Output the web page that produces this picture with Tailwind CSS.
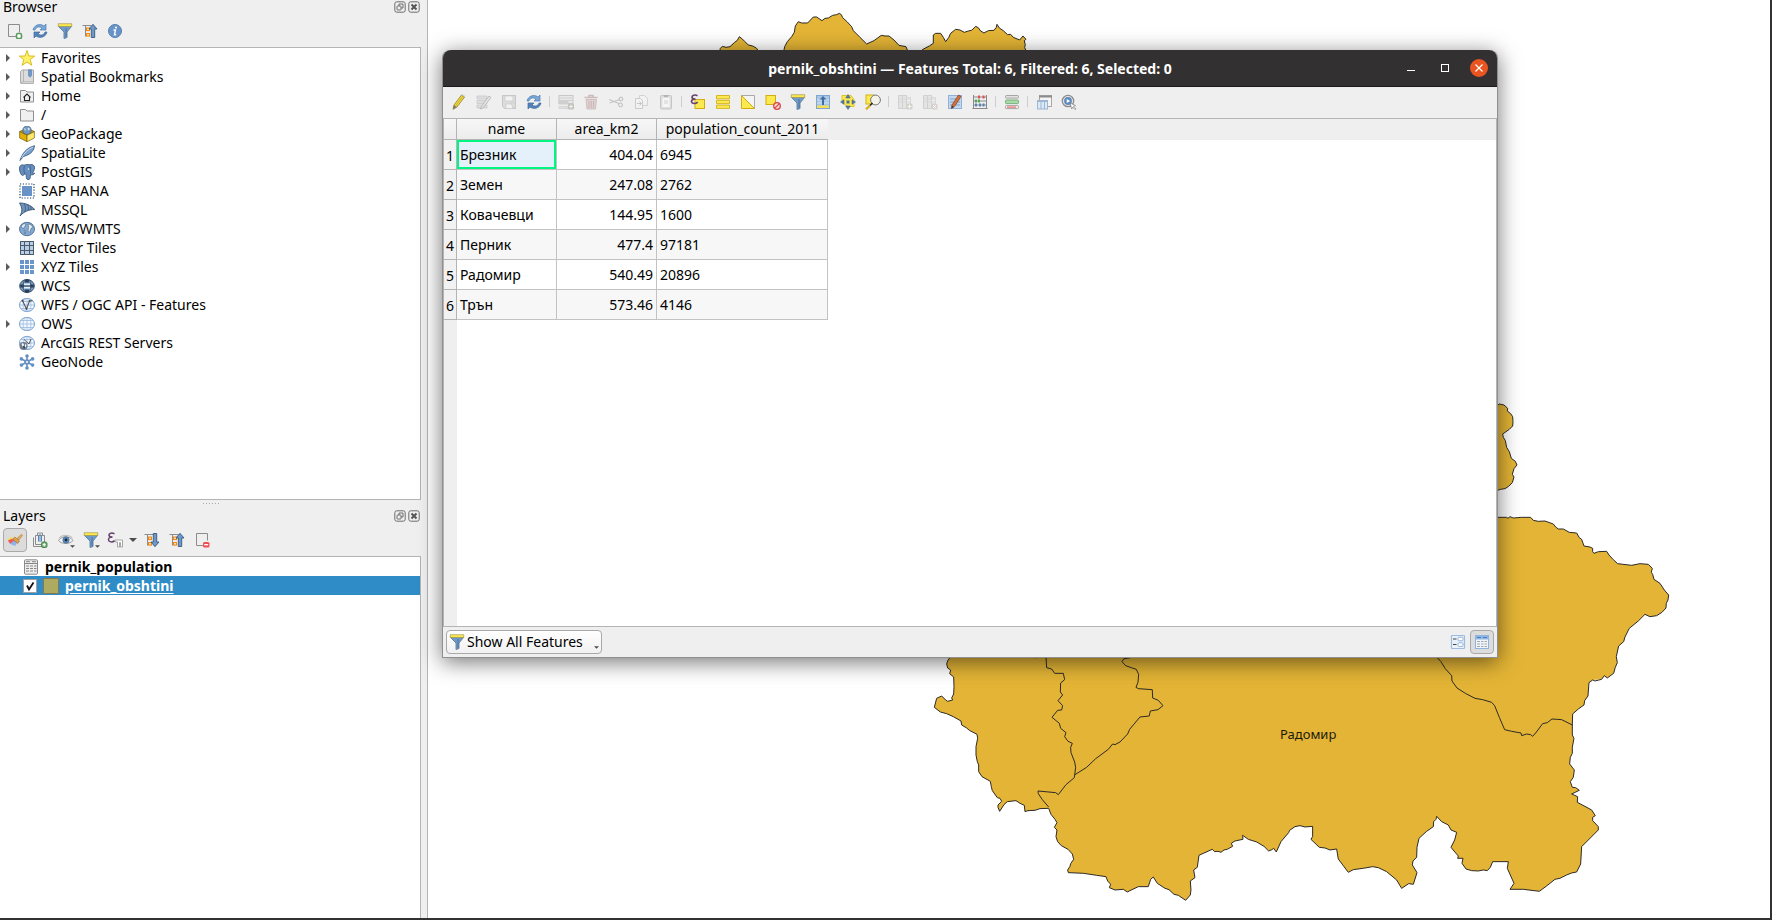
<!DOCTYPE html>
<html lang="en">
<head>
<meta charset="utf-8">
<title>pernik_obshtini — Features</title>
<script src="https://cdn.jsdelivr.net/npm/@tailwindcss/browser@4"></script>
</head>
<body class="h-screen overflow-hidden bg-white font-['Noto_Sans','Open_Sans',sans-serif] text-sm text-black">

<svg class="hidden" aria-hidden="true">
  <defs>
    <symbol id="add-layer" viewBox="0 0 16 16"><path d="M10 13.500H1.500V1.500h11v8" fill="none" stroke="#8c8c8c"/><rect x="9.500" y="10.500" width="5" height="5" rx="1.500" fill="#fff" stroke="#5b9a5f" stroke-width="1.600"/></symbol>
    <symbol id="refresh" viewBox="0 0 16 16"><path d="M1 7C2 2 8 0 12 3l2-2v6H8l2-2C7 3 4 4 3 7z" fill="#7ba7d6" stroke="#4d7fb5" stroke-width=".7"/><path d="M15 9c-1 5-7 7-11 4l-2 2V9h6l-2 2c3 2 6 1 7-2z" fill="#5482b7" stroke="#416f9f" stroke-width=".7"/></symbol>
    <symbol id="funnel" viewBox="0 0 16 16"><path d="M1.500 3.500h13L10 9v5.500l-3 1V9z" fill="#6f9bcb" stroke="#5d7f9f" stroke-width=".9"/><path d="M9 5v9" stroke="#466b91" stroke-width=".8"/><rect x="1.200" y=".8" width="13.600" height="2.600" fill="#fce94f" stroke="#a39a54" stroke-width=".7"/></symbol>
    <symbol id="collapse" viewBox="0 0 16 16"><path d="M.5 2.500h9M3.500 2.500v11M3.500 6h2M3.500 12.500h2" fill="none" stroke="#8c8c8c"/><rect x="4.500" y="5" width="3" height="2.600" fill="#ffd9a8" stroke="#f5860c"/><rect x="4.500" y="10.500" width="3" height="2.600" fill="#ffd9a8" stroke="#f5860c"/><path d="M11 1.300 15 6h-2.300v8.500H9.300V6H7z" fill="#6f97c7" stroke="#335b83" stroke-width=".9"/></symbol>
    <symbol id="expand" viewBox="0 0 16 16"><path d="M.5 2.500h9M3.500 2.500v11M3.500 6h2M3.500 12.500h2" fill="none" stroke="#8c8c8c"/><rect x="4.500" y="5" width="3" height="2.600" fill="#ffd9a8" stroke="#f5860c"/><rect x="4.500" y="10.500" width="3" height="2.600" fill="#ffd9a8" stroke="#f5860c"/><path d="M11 14.700 15 10h-2.300V1.500H9.300V10H7z" fill="#6f97c7" stroke="#335b83" stroke-width=".9"/></symbol>
    <symbol id="info" viewBox="0 0 16 16"><circle cx="8" cy="8" r="6.500" fill="#6793c6" stroke="#5580b0"/><circle cx="9" cy="4.500" r="1.100" fill="#fff"/><path d="M6.500 7h2L7.500 11.700h1.700" fill="none" stroke="#fff" stroke-width="1.400"/></symbol>
    <symbol id="star" viewBox="0 0 16 16"><path d="M8 .5 9.900 6l5.800.1-4.500 3.500 1.600 5.700L8 12l-4.800 3.300 1.600-5.700L.3 6.100 6.100 6z" fill="#fdf06a" stroke="#d9b511" stroke-width=".9"/></symbol>
    <symbol id="bookmark" viewBox="0 0 16 16"><path d="M1.500 2.500 3 1h11.500v12H3l-1 1.500-.5-1z" fill="#dcdcdc" stroke="#a9a9a9"/><path d="M4.500 1v12M2 14.500h12.500V13" fill="none" stroke="#b4b4b4"/><path d="M9.500.8h3v6L11 8.300 9.500 6.800z" fill="#6c98ca" stroke="#4a76a8" stroke-width=".5"/></symbol>
    <symbol id="folder" viewBox="0 0 16 16"><path d="M1.500 2.500h5l1.500 1.500h6.500v10h-13z" fill="#f0f0f0" stroke="#8e8e8e"/></symbol>
    <symbol id="home" viewBox="0 0 16 16"><use href="#folder"/><path d="M4.500 9.500 8 6l3.500 3.500M5.500 9v3.500h5V9" fill="none" stroke="#222" stroke-width="1.100"/></symbol>
    <symbol id="geopackage" viewBox="0 0 16 16"><path d="M.6 5.500 8 2l7.400 3.500L8 9.500z" fill="#c29a12" stroke="#7b6410" stroke-width=".7"/><circle cx="8" cy="4.300" r="4.100" fill="#6f97c4" stroke="#3f5c7c" stroke-width=".7"/><path d="M5 2l2 1-1 2zM9 1.500l2 1-1 2-1.500-1z" fill="#d8e5f2"/><path d="M.6 5.700 8 9.300v6.400L.6 12z" fill="#e2b007" stroke="#7b6410" stroke-width=".7"/><path d="M8 9.300 15.400 5.700V12L8 15.700z" fill="#fbe96b" stroke="#7b6410" stroke-width=".7"/></symbol>
    <symbol id="feather" viewBox="0 0 16 16"><path d="M1 15.500C3 9 7 3 15.500.7 15 5 13 9 4.500 11.500z" fill="#79a2d0" stroke="#3e5f83" stroke-width=".9"/><path d="M2.500 13C5 8 9 4.500 14 2" fill="none" stroke="#dbe8f5" stroke-width=".8"/></symbol>
    <symbol id="elephant" viewBox="0 0 16 16"><path d="M5 1.200C2 .2.300 1.700.5 5c.3 3 1.300 6 3 6.500 1 .2 1.500-1 2-1.500h1.700c0 2-.2 5.500 1.800 5.700 2.300 0 2.400-2.200 2.400-4.900 2.500.3 4-.6 4.300-1.500-1 .2-1.700.2-2-.2C14.900 7 16 4 15.400 2.300 14.300.5 12.500.3 10.700.8 8.500.3 7 .5 5 1.200z" fill="#668fbf" stroke="#3b5a7d" stroke-width=".9"/><path d="M5.500 2c-1 2-.5 5 0 8M10.500 1.500c1.500 2 1 5.500 1 8" fill="none" stroke="#3b5a7d" stroke-width=".8"/><circle cx="9.500" cy="5" r=".7" fill="#fff"/></symbol>
    <symbol id="chip" viewBox="0 0 16 16"><path d="M1 1h14v14H1z" fill="none" stroke="#1f3f60" stroke-width="1.200" stroke-dasharray="1.200 1.600"/><rect x="3" y="3" width="10" height="10" fill="#6793c9"/></symbol>
    <symbol id="mssql" viewBox="0 0 16 16"><path d="M.5 1C6 1 12 3 15.700 7.500 10 7.500 5 9.500 1 14 3.500 9.500 3.500 6 .5 1z" fill="#6f93bb" stroke="#35526f" stroke-width=".9"/><path d="M5 2c2 3 2 5.500.5 8M8.500 3c1.300 2 1.300 3.500.4 5.400M11.500 4.500c.7 1 .7 2 .2 3" fill="none" stroke="#35526f" stroke-width=".7"/></symbol>
    <symbol id="globe-dark" viewBox="0 0 16 16"><ellipse cx="8" cy="8" rx="7.500" ry="6.700" fill="#84a9d3" stroke="#4c6b8d" stroke-width=".9"/><path d="M2 5l3-2.500 2 1L5.500 6 4 8zM9 3l3 .5 2 3-2 1-1 4-2-2 .5-3zM5 9l2 1-1 3z" fill="#dfe8f1" stroke="#35526f" stroke-width=".5"/></symbol>
    <symbol id="grid-lines" viewBox="0 0 16 16"><rect x="1.500" y="1.500" width="13" height="13" fill="#b9cfe8" stroke="#4b5a6b"/><path d="M5.500 1.500v13M10.500 1.500v13M1.500 5.500h13M1.500 10.500h13" stroke="#4b5a6b"/></symbol>
    <symbol id="grid-dots" viewBox="0 0 16 16"><path d="M1 1h4v4H1zM6 1h4v4H6zM11 1h4v4h-4zM1 6h4v4H1zM6 6h4v4H6zM11 6h4v4h-4zM1 11h4v4H1zM6 11h4v4H6zM11 11h4v4h-4z" fill="#6a96cb"/></symbol>
    <symbol id="wcs" viewBox="0 0 16 16"><ellipse cx="8" cy="8" rx="7.300" ry="6.500" fill="#7d9fc6" stroke="#2e4964"/><path d="M1.500 6.500h3v3h-3zM11.500 6.500h3v3h-3zM6 2h4v2.500H6zM6 11.500h4V14H6z" fill="#2a4058"/><path d="M5 5.500h6v1.800H5zM5 8.700h6v1.800H5z" fill="#e6eef7"/><ellipse cx="8" cy="8" rx="4" ry="6.500" fill="none" stroke="#2a4058" stroke-width=".8"/><path d="M1 8h14" stroke="#2a4058"/></symbol>
    <symbol id="globe" viewBox="0 0 16 16"><ellipse cx="8" cy="8" rx="7.500" ry="6.600" fill="#f4f9ff" stroke="#6593c7" stroke-width=".9"/><path d="M.5 8h15M2 4.500h12M2 11.500h12M8 1.500v13" stroke="#8db1dc" stroke-width=".7"/><ellipse cx="8" cy="8" rx="4" ry="6.600" fill="none" stroke="#8db1dc" stroke-width=".7"/></symbol>
    <symbol id="wfs" viewBox="0 0 16 16"><use href="#globe"/><path d="M3.500 3.500 7.500 12 10.500 4l3-.5" fill="none" stroke="#555" stroke-width="1.100"/><path d="M2.800 2.800h1.600v1.600H2.800zM6.700 11.200h1.600v1.600H6.700zM9.700 3.200h1.600v1.600H9.700z" fill="#444"/></symbol>
    <symbol id="arcgis" viewBox="0 0 16 16"><use href="#globe"/><path d="M5 4.500 10 9l2-5" fill="none" stroke="#555"/><circle cx="4.500" cy="11" r="4" fill="#6e7f90"/><path d="M2.500 9l1.500-1 1 2-1 2zM6 9l1.500 1L6 13z" fill="#fff"/><path d="M4 11l2 1-1 2z" fill="#222"/></symbol>
    <symbol id="snow" viewBox="0 0 16 16"><path d="M8 1.800v12.400M2.300 4.800l11.400 6.400M13.700 4.800 2.300 11.200" stroke="#6590c2" stroke-width="1.600"/><g fill="#6590c2"><circle cx="8" cy="2" r="1.800"/><circle cx="8" cy="14" r="1.800"/><circle cx="2.400" cy="4.900" r="1.800"/><circle cx="13.600" cy="4.900" r="1.800"/><circle cx="2.400" cy="11.100" r="1.800"/><circle cx="13.600" cy="11.100" r="1.800"/><circle cx="8" cy="8" r="2.800"/></g><circle cx="8" cy="8" r="1" fill="#fff"/></symbol>
    <symbol id="brush" viewBox="0 0 16 16"><path d="M10 6.500 14.500 2.300l1 1.200-4 4.800z" fill="#e0ae5d" stroke="#b07b30" stroke-width=".6"/><path d="M1.500 6 6 5.200 3.800 8.500 1 8.800z" fill="#f7e04a"/><path d="M.8 8.500 5 6.800 8 8.500 5 12.200 3 11.800z" fill="#f25a5a"/><path d="M3 11.800 8 8l2.500 2.200L8 14z" fill="#8bb4ea"/><path d="M8 5l4.500 4-1.800 2.500-5-4.500z" fill="#dba04b" stroke="#a6722c" stroke-width=".6"/></symbol>
    <symbol id="add-group" viewBox="0 0 16 16"><path d="M1.500 5.500v9H10M3.500 3.500v9h9v-9zM5.500 3v-2h5v2" fill="none" stroke="#8c8c8c"/><path d="M8 2v8M6.500 3.500v6M9.500 3.500v6" stroke="#5884b5"/><rect x="9.500" y="10" width="5.500" height="5.500" rx="1.500" fill="#6aa86c" stroke="#4b8650"/><path d="M12.200 11v3.600M10.500 12.800H14" stroke="#fff"/></symbol>
    <symbol id="eye" viewBox="0 0 16 16"><path d="M.5 8.500C3.500 3.500 11.500 3.500 15 8.500 11.500 12.500 4 12.500.5 8.500z" fill="#f6f6f6" stroke="#999"/><path d="M1 6C4 2.500 11 2.500 14.500 6" fill="none" stroke="#b6b6b6"/><circle cx="8" cy="8" r="3.200" fill="#5c8bc0" stroke="#3d658f" stroke-width=".6"/><circle cx="8" cy="8" r="1.400" fill="#1a2a3b"/></symbol>
    <symbol id="epsilon-filter" viewBox="0 0 16 16"><path d="M7.500 2C5 .2 1.800 1.300 2 3.300 2.200 4.800 4 5 5.500 5 3 5 1.200 6 1.500 8c.3 2.200 4 2.600 6.200.6" fill="none" stroke="#66406f" stroke-width="1.500"/><path d="M8 8h7.500v7h-2v-4.500h-1V15h-2v-5l-2 0z" fill="#fff" stroke="#a5a5a5"/></symbol>
    <symbol id="remove" viewBox="0 0 16 16"><path d="M9 13.500H2.500v-12h11v7" fill="none" stroke="#8c8c8c"/><rect x="9" y="10" width="6.500" height="5.500" rx="1.500" fill="#ef4d55"/><path d="M10.200 12.700h4" stroke="#fff" stroke-width="1.300"/></symbol>
    <symbol id="table-grey" viewBox="0 0 16 16"><rect x="1.500" y=".8" width="13" height="14.400" rx="1" fill="#ededed" stroke="#8a8a8a"/><path d="M1.500 4.500h13M3 2.700h4M9 2.700h4M3 7h3M7 7h3M11 7h2.500M3 9.500h3M7 9.500h3M11 9.500h2.500M3 12h3M7 12h3M11 12h2.500" stroke="#868686"/></symbol>
    <symbol id="pencil" viewBox="0 0 16 16"><path d="M3 11 10.500 1l3 2L6 13 2 15.300z" fill="#f3dc3d" stroke="#8a7c2a" stroke-width=".8"/><path d="M4.500 12 12 2" stroke="#b89f22" stroke-width=".7"/><path d="M10.500 1l3 2 .7-1L11.500.3z" fill="#c9c9c9"/><path d="M3 11.200 5.600 13 2 15.300z" fill="#777"/></symbol>
    <symbol id="multi-edit" viewBox="0 0 16 16"><path d="M1 2h10v3H1zM1 6.500h10v3H1zM1 11h10v3H1z" fill="#dedede" stroke="#c6c6c6" stroke-width=".7"/><path d="M5 13 13 2l2 1.500-8 10.500-3 1z" fill="#e4e4e4" stroke="#b2b2b2" stroke-width=".8"/></symbol>
    <symbol id="save" viewBox="0 0 16 16"><path d="M1.500 1.500h13v13h-11l-2-2z" fill="#dcdcdc" stroke="#c6c6c6"/><path d="M4 2h8v5H4zM5 10h7v4.500H5z" fill="#f2f2f2" stroke="#cacaca" stroke-width=".7"/><path d="M10 9l3-1 2 4-3 2z" fill="#ddd" stroke="#c4c4c4" stroke-width=".5"/></symbol>
    <symbol id="add-row" viewBox="0 0 16 16"><rect x="1" y="1.500" width="14" height="8" fill="#e8e8e8" stroke="#c8c8c8"/><path d="M1 4h14M1 6.500h14" stroke="#d0d0d0"/><path d="M.5 6.500h10v4h-10z" fill="#cfcfcf"/><path d="M1 12.500h9v2H1z" fill="#e2e2e2" stroke="#cacaca" stroke-width=".6"/><rect x="10" y="9.500" width="6" height="6" rx="1.500" fill="#bfc3ba"/><path d="M13 10.500v4M11 12.500h4" stroke="#f2f2f2"/></symbol>
    <symbol id="trash" viewBox="0 0 16 16"><path d="M1.500 3.500h13M6 3V1.500h4V3" fill="none" stroke="#cdbaba" stroke-width="1.400"/><path d="M3 5.500h10.500l-1 9.500h-8.500z" fill="#e0d2d2" stroke="#cbb8b8" stroke-width=".8"/><path d="M6 7v7M8.300 7v7M10.600 7v7" stroke="#cab4b4"/></symbol>
    <symbol id="scissors" viewBox="0 0 16 16"><path d="M1 5.500 11 9.500M1.500 9 12 5.500" stroke="#c4c4c4" stroke-width="1.300"/><circle cx="13" cy="5" r="1.900" fill="none" stroke="#bcbcbc"/><circle cx="12.500" cy="11" r="1.900" fill="none" stroke="#bcbcbc"/></symbol>
    <symbol id="copy" viewBox="0 0 16 16"><path d="M6.500 1.500h5l3 3v7h-8z" fill="#f2f2f2" stroke="#d2d2d2"/><path d="M2.500 4.500h5l2 2v8h-7z" fill="#f2f2f2" stroke="#cbcbcb"/><path d="M4 9.500h4M6.500 7.500 8.500 9.500l-2 2" fill="none" stroke="#c4c4c4"/></symbol>
    <symbol id="paste" viewBox="0 0 16 16"><rect x="2.500" y="1.500" width="11" height="13.500" rx="1" fill="#dedede" stroke="#c6c6c6"/><rect x="4.500" y="4" width="7" height="9" fill="#f6f6f6"/><path d="M6 1h4v2H6z" fill="#b4b4b4"/><path d="M6 7h4M6 9h4" stroke="#d2d2d2"/></symbol>
    <symbol id="epsilon-select" viewBox="0 0 16 16"><rect x="5" y="5.500" width="9.500" height="9" fill="#fce94f" stroke="#d3ac12"/><path d="M7.500 1.800C5 .3 1.800 1.300 2 3.300 2.200 4.800 4 5 5.500 5 3 5 1.200 6 1.500 7.700c.3 2.200 4 2.400 6.200.4" fill="none" stroke="#66406f" stroke-width="1.600"/></symbol>
    <symbol id="select-all" viewBox="0 0 16 16"><path d="M1.500 1.500h13v3.300h-13zM1.500 6.300h13v3.300h-13zM1.500 11.100h13v3.300h-13z" fill="#fce94f" stroke="#d3b11b" stroke-width=".9"/></symbol>
    <symbol id="invert" viewBox="0 0 16 16"><path d="M1.500 1.500h13v13z" fill="#f4f4f4" stroke="#a9a9a9"/><path d="M1.500 1.500v13h13z" fill="#fce94f" stroke="#d3ac12"/></symbol>
    <symbol id="deselect" viewBox="0 0 16 16"><rect x="1" y="1.500" width="9.500" height="9" fill="#fce94f" stroke="#d3ac12"/><circle cx="12" cy="12" r="3.300" fill="#f8d5d5" stroke="#d94444" stroke-width="1.300"/><path d="M9.800 14.200 14.200 9.800" stroke="#d94444" stroke-width="1.200"/></symbol>
    <symbol id="move-top" viewBox="0 0 16 16"><rect x="1.500" y="1.500" width="13" height="13" fill="#a9c6e6" stroke="#7fa6d1"/><path d="M2 6h12M2 9h12" stroke="#d4e3f4"/><path d="M2 11.500h12v2.500H2z" fill="#f3df55"/><path d="M8 2 11.500 5.500H9V11H7V5.500H4.500z" fill="#3f6e9f"/></symbol>
    <symbol id="pan-to" viewBox="0 0 16 16"><path d="M2 1.500h9l3 4v7h-6l-6-4z" fill="#fce94f" stroke="#dfc22a"/><path d="M8 .5 10.300 4H5.700zM8 15.500 5.700 12h4.600zM.5 8 4 5.700v4.600zM15.500 8 12 10.300V5.700z" fill="#587da5" stroke="#3b5b80" stroke-width=".5"/><path d="M6.500 6.500h3v3h-3z" fill="#4b6e94"/></symbol>
    <symbol id="zoom-to" viewBox="0 0 16 16"><rect x="1" y="1" width="8" height="9" fill="#fce94f" stroke="#d3b11b"/><circle cx="10.500" cy="6" r="4.900" fill="#f3f3ea" stroke="#777"/><path d="M5 11.500 1 15.300" stroke="#dcae22" stroke-width="2.400"/><path d="M7.500 9 5 11.500" stroke="#222" stroke-width="1.600"/></symbol>
    <symbol id="new-field" viewBox="0 0 16 16"><path d="M1.500 1.500h4v13h-4zM5.500 1.500h4v13h-4z" fill="#e4e4e4" stroke="#d0d0d0"/><path d="M9.500 3.500h4v7h-4M1.500 5h12M1.500 8h12" fill="none" stroke="#d8d8d8"/><rect x="9.500" y="9.500" width="6" height="6" rx="1.500" fill="#d0d3c8"/><path d="M12.500 10.500v4M10.500 12.500h4" stroke="#f8f8f8"/></symbol>
    <symbol id="delete-field" viewBox="0 0 16 16"><path d="M1.500 1.500h4v13h-4zM5.500 1.500h4v13h-4z" fill="#e4e4e4" stroke="#d0d0d0"/><path d="M9.500 3.500h4v7h-4M1.500 5h12M1.500 8h12" fill="none" stroke="#d8d8d8"/><rect x="9.500" y="9.500" width="6" height="6" rx="1.500" fill="#d8cfcf"/><path d="M11 11l3 3M14 11l-3 3" stroke="#f8f8f8"/></symbol>
    <symbol id="calc-pencil" viewBox="0 0 16 16"><rect x="1.500" y="1.500" width="13" height="13" fill="#c3d8ef" stroke="#8fb1d8"/><path d="M3 5h10M3 8h10M3 11h10" stroke="#7fa3cd"/><path d="M5 11 11.500 1l2.500 1.500L7.500 12.500 4.500 14.500z" fill="#d8703a" stroke="#7d3d1d" stroke-width=".7"/><path d="M4.900 11.700l1.900 1.200-2.300 1.600z" fill="#333"/></symbol>
    <symbol id="abacus" viewBox="0 0 16 16"><path d="M1.500 1v14M14.500 1v14M.5 14.500h15M1 3h14M1 7h14M1 11h14" stroke="#888" fill="none"/><path d="M6 1.600h2v2.800H6zM10.500 1.600h2v2.800h-2z" fill="#e35151"/><path d="M3 5.600h2v2.800H3zM6 5.600h2v2.800H6z" fill="#57a95e"/><path d="M3 9.600h2v2.800H3zM7 9.600h2v2.800H7zM10.500 9.600h2v2.800h-2z" fill="#5a86b8"/></symbol>
    <symbol id="conditional" viewBox="0 0 16 16"><rect x="1.500" y="1.500" width="13" height="2.600" rx=".8" fill="#e2e2e2" stroke="#a5a5a5"/><rect x="1.500" y="6" width="13" height="3.600" rx=".8" fill="#a5dca6" stroke="#7cae80"/><rect x="1.500" y="11.600" width="13" height="3" rx=".8" fill="#fbeaea" stroke="#a5a5a5"/><path d="M3 13.100h9" stroke="#e85a5a"/></symbol>
    <symbol id="dock" viewBox="0 0 16 16"><rect x="3.500" y="1.500" width="12" height="11" fill="#f4f4f4" stroke="#a8a8a8"/><path d="M3 2.500h13" stroke="#8c8c8c" stroke-width="2"/><rect x="1.500" y="6.500" width="10" height="8.500" fill="#dce9f7" stroke="#9db7d3"/><path d="M1.500 7.500h10M5 7v8M8.500 7v8" stroke="#9db7d3"/></symbol>
    <symbol id="action" viewBox="0 0 16 16"><circle cx="7" cy="7" r="5.700" fill="#e9e9e9" stroke="#8c8c8c" stroke-width="1.300"/><circle cx="7" cy="7" r="3.900" fill="#5b8ac0"/><path d="M5.700 4.900 9.300 7l-3.600 2.100z" fill="#fff"/><path d="M9 9l5.500 2.500-2 .8 2.500 2.500-1 .8-2.300-2.500-1 1.800z" fill="#fff" stroke="#777" stroke-width=".7"/></symbol>
    <symbol id="form-view" viewBox="0 0 16 16"><rect x="1.500" y="1.500" width="13" height="13" rx=".5" fill="#e9f1fa" stroke="#9dbde0" stroke-width="1.200"/><path d="M3 5h3.500M3 10.500h3.500" stroke="#444" stroke-width="1.200"/><rect x="8" y="3.200" width="5" height="3.600" rx="1" fill="#fff" stroke="#93b5db"/><rect x="8" y="8.800" width="5" height="3.600" rx="1" fill="#fff" stroke="#93b5db"/></symbol>
    <symbol id="table-view" viewBox="0 0 16 16"><rect x="1.500" y="1.500" width="13" height="13" fill="#f1f5fa" stroke="#8fb3dc"/><path d="M1.500 1.500h13v4h-13z" fill="#8fb6e4"/><path d="M3 3.500h4M9 3.500h4" stroke="#4c7db4"/><path d="M3 7.500h3M7 7.500h2.500M10.500 7.500H13M3 10h3M7 10h2.500M10.500 10H13M3 12.500h3M7 12.500h2.500M10.500 12.500H13" stroke="#a1a9b2"/></symbol>
    <symbol id="float" viewBox="0 0 12 12"><rect x=".8" y=".8" width="10.400" height="10.400" rx="2" fill="none" stroke="#6d6d6d"/><rect x="3" y="5" width="4" height="4" rx=".5" fill="none" stroke="#6d6d6d"/><path d="M5 5V3h4v4H7" fill="none" stroke="#6d6d6d"/></symbol>
    <symbol id="close" viewBox="0 0 12 12"><rect x=".8" y=".8" width="10.400" height="10.400" rx="2" fill="none" stroke="#6d6d6d"/><path d="M3.500 3.500l5 5M8.500 3.500l-5 5" stroke="#555" stroke-width="2"/></symbol>
    <symbol id="arrow-right" viewBox="0 0 4 8"><path d="M0 0 4 4 0 8z" fill="#5a5a5a"/></symbol>
    <symbol id="arrow-down" viewBox="0 0 8 4"><path d="M0 0h8L4 4z" fill="#4d4d4d"/></symbol>
  </defs>
</svg>

<main class="flex h-full border-r-2 border-b-2 border-[#333132]">

  <aside class="flex w-[428px] shrink-0 flex-col border-r border-[#b4b4b4] bg-[#efefef] pr-[6px]">
    <section class="flex h-[500px] flex-col" aria-label="Browser">
      <header class="flex h-[14px] items-center gap-[2px] pr-px pl-[3px]">
        <h2 class="grow leading-[14px]">Browser</h2>
        <button aria-label="Float Browser"><svg class="size-3"><use href="#float"/></svg></button>
        <button aria-label="Close Browser"><svg class="size-3"><use href="#close"/></svg></button>
      </header>
      <div class="flex h-[33px] items-center pl-[2px]">
        <button class="flex w-[25px] justify-center" aria-label="Add selected layers"><svg class="size-4"><use href="#add-layer"/></svg></button>
        <button class="flex w-[25px] justify-center" aria-label="Refresh"><svg class="size-4"><use href="#refresh"/></svg></button>
        <button class="flex w-[25px] justify-center" aria-label="Filter browser"><svg class="size-4"><use href="#funnel"/></svg></button>
        <button class="flex w-[25px] justify-center" aria-label="Collapse all"><svg class="size-4"><use href="#collapse"/></svg></button>
        <button class="flex w-[25px] justify-center" aria-label="Properties"><svg class="size-4"><use href="#info"/></svg></button>
      </div>
      <ul class="grow border-t border-r border-b border-[#b4b4b4] bg-white leading-[19px]">
        <li class="flex h-[19px] items-center pl-[6px]"><svg class="mr-[9px] h-2 w-1"><use href="#arrow-right"/></svg><svg class="mr-[6px] size-4"><use href="#star"/></svg>Favorites</li>
        <li class="flex h-[19px] items-center pl-[6px]"><svg class="mr-[9px] h-2 w-1"><use href="#arrow-right"/></svg><svg class="mr-[6px] size-4"><use href="#bookmark"/></svg>Spatial Bookmarks</li>
        <li class="flex h-[19px] items-center pl-[6px]"><svg class="mr-[9px] h-2 w-1"><use href="#arrow-right"/></svg><svg class="mr-[6px] size-4"><use href="#home"/></svg>Home</li>
        <li class="flex h-[19px] items-center pl-[6px]"><svg class="mr-[9px] h-2 w-1"><use href="#arrow-right"/></svg><svg class="mr-[6px] size-4"><use href="#folder"/></svg>/</li>
        <li class="flex h-[19px] items-center pl-[6px]"><svg class="mr-[9px] h-2 w-1"><use href="#arrow-right"/></svg><svg class="mr-[6px] size-4"><use href="#geopackage"/></svg>GeoPackage</li>
        <li class="flex h-[19px] items-center pl-[6px]"><svg class="mr-[9px] h-2 w-1"><use href="#arrow-right"/></svg><svg class="mr-[6px] size-4"><use href="#feather"/></svg>SpatiaLite</li>
        <li class="flex h-[19px] items-center pl-[6px]"><svg class="mr-[9px] h-2 w-1"><use href="#arrow-right"/></svg><svg class="mr-[6px] size-4"><use href="#elephant"/></svg>PostGIS</li>
        <li class="flex h-[19px] items-center pl-[19px]"><svg class="mr-[6px] size-4"><use href="#chip"/></svg>SAP HANA</li>
        <li class="flex h-[19px] items-center pl-[19px]"><svg class="mr-[6px] size-4"><use href="#mssql"/></svg>MSSQL</li>
        <li class="flex h-[19px] items-center pl-[6px]"><svg class="mr-[9px] h-2 w-1"><use href="#arrow-right"/></svg><svg class="mr-[6px] size-4"><use href="#globe-dark"/></svg>WMS/WMTS</li>
        <li class="flex h-[19px] items-center pl-[19px]"><svg class="mr-[6px] size-4"><use href="#grid-lines"/></svg>Vector Tiles</li>
        <li class="flex h-[19px] items-center pl-[6px]"><svg class="mr-[9px] h-2 w-1"><use href="#arrow-right"/></svg><svg class="mr-[6px] size-4"><use href="#grid-dots"/></svg>XYZ Tiles</li>
        <li class="flex h-[19px] items-center pl-[19px]"><svg class="mr-[6px] size-4"><use href="#wcs"/></svg>WCS</li>
        <li class="flex h-[19px] items-center pl-[19px]"><svg class="mr-[6px] size-4"><use href="#wfs"/></svg>WFS / OGC API - Features</li>
        <li class="flex h-[19px] items-center pl-[6px]"><svg class="mr-[9px] h-2 w-1"><use href="#arrow-right"/></svg><svg class="mr-[6px] size-4"><use href="#globe"/></svg>OWS</li>
        <li class="flex h-[19px] items-center pl-[19px]"><svg class="mr-[6px] size-4"><use href="#arcgis"/></svg>ArcGIS REST Servers</li>
        <li class="flex h-[19px] items-center pl-[19px]"><svg class="mr-[6px] size-4"><use href="#snow"/></svg>GeoNode</li>
      </ul>
    </section>

    <div class="flex h-[6px] items-center justify-center gap-px">
      <span class="size-px bg-[#a8a8a8]"></span><span class="ml-px size-px bg-[#a8a8a8]"></span><span class="ml-px size-px bg-[#a8a8a8]"></span><span class="ml-px size-px bg-[#a8a8a8]"></span><span class="ml-px size-px bg-[#a8a8a8]"></span><span class="ml-px size-px bg-[#a8a8a8]"></span>
    </div>

    <section class="flex grow flex-col" aria-label="Layers">
      <header class="flex h-5 items-center gap-[2px] pr-px pl-[3px]">
        <h2 class="grow leading-5">Layers</h2>
        <button aria-label="Float Layers"><svg class="size-3"><use href="#float"/></svg></button>
        <button aria-label="Close Layers"><svg class="size-3"><use href="#close"/></svg></button>
      </header>
      <div class="flex h-[30px] items-center pb-[2px] pl-[3px]">
        <button class="flex size-6 items-center justify-center rounded-sm border border-[#a9a9a9] bg-[#dcdcdc]" aria-label="Open layer styling panel"><svg class="size-4"><use href="#brush"/></svg></button>
        <button class="flex w-[25px] justify-center" aria-label="Add group"><svg class="size-4"><use href="#add-group"/></svg></button>
        <button class="flex w-[25px] items-end justify-center" aria-label="Manage map themes"><svg class="ml-1 size-4"><use href="#eye"/></svg><svg class="-ml-1 h-[3px] w-[5px]"><use href="#arrow-down"/></svg></button>
        <button class="flex w-[25px] items-end justify-center" aria-label="Filter legend"><svg class="ml-1 size-4"><use href="#funnel"/></svg><svg class="-ml-1 h-[3px] w-[5px]"><use href="#arrow-down"/></svg></button>
        <button class="flex w-[37px] items-center justify-between pr-[2px] pl-[5px]" aria-label="Filter legend by expression"><svg class="size-4"><use href="#epsilon-filter"/></svg><svg class="h-1 w-2"><use href="#arrow-down"/></svg></button>
        <button class="flex w-[25px] justify-center" aria-label="Expand all"><svg class="size-4"><use href="#expand"/></svg></button>
        <button class="flex w-[25px] justify-center" aria-label="Collapse all layers"><svg class="size-4"><use href="#collapse"/></svg></button>
        <button class="flex w-[25px] justify-center" aria-label="Remove layer"><svg class="size-4"><use href="#remove"/></svg></button>
      </div>
      <ul class="grow border-t border-r border-[#b4b4b4] bg-white font-bold leading-[19px]">
        <li class="flex h-[19px] items-center pl-[23px]"><svg class="mr-[6px] size-4"><use href="#table-grey"/></svg>pernik_population</li>
        <li class="flex h-[19px] items-center bg-[#308cc6] pl-[23px] text-white">
          <label class="flex items-center">
            <span class="relative mr-[6px] flex size-[14px]">
              <input type="checkbox" checked class="peer size-[14px] appearance-none border border-[#a0a0a0] bg-white">
              <svg class="absolute inset-0 hidden size-[14px] peer-checked:block" viewBox="0 0 14 14"><path d="M4 6.500 6 10.500 10.500 3.500" fill="none" stroke="#111" stroke-width="1.800"/></svg>
            </span>
            <span class="mr-[6px] size-4 border border-[#7f7a4f] bg-[#aeab60]"></span>
            <span class="underline underline-offset-2">pernik_obshtini</span>
          </label>
        </li>
      </ul>
    </section>
  </aside>

  <section class="relative grow overflow-hidden bg-white" aria-label="Map canvas">
    <svg class="h-full w-full" viewBox="428 0 1342 918" preserveAspectRatio="xMinYMin slice" role="img" aria-label="Map of Pernik municipalities">
      <g fill="#e3b435" stroke="#2b2925" stroke-width="3" stroke-linejoin="round">
        <g transform="translate(690 0) scale(.3333)">
          <path d="M88 160 91 145 97 139 108 142 120 140 134 127 142 121 148 110 157 117 164 124 175 135 188 138 200 145 206 155"/>
          <path d="M280 160 284 140 292 125 305 110 313 97 316 78 325 65 335 69 353 69 370 51 380 51 396 62 405 55 415 54 428 46 440 44 448 40 454 44 458 53 472 66 485 80 490 92 510 112 530 132 552 122 574 106 585 108 597 108 612 120 627 136 648 140 656 160"/>
          <path d="M692 160 697 149 718 138 730 130 730 105 737 100 752 100 760 112 767 125 776 113 782 100 797 88 810 90 823 97 835 93 845 91 857 79 865 83 872 93 882 99 895 92 912 91 919 82 921 73 928 84 940 92 953 104 962 103 970 112 989 120 999 108 1008 118 1003 122 1006 135 1004 142 1011 160"/>
        </g>
        <g transform="translate(1380 380) scale(.3333)">
          <path d="M330 80 350 78 358 72 372 75 383 85 382 93 392 101 398 110 399 125 398 138 388 148 368 162 370 172 376 182 380 202 388 215 394 235 406 244 411 255 402 266 397 283 402 291 397 308 386 319 375 326 362 328 350 332 330 332"/>
          <path d="M330 412 380 412 384 415 390 410 400 414 425 412 452 412 460 421 475 424 495 423 520 432 527 441 535 447 550 447 568 457 590 459 598 473 605 478 612 498 630 501 638 505 638 515 642 520 655 515 680 514 687 525 700 539 713 551 755 556 780 551 805 553 817 565 814 577 818 583 822 598 840 610 853 630 866 645 864 660 859 670 858 684 846 697 830 707 810 710 795 703 700 718 330 770" stroke="none"/>
        </g>
        <g transform="translate(920 640) scale(.3333)">
          <path d="M91 40 91 51 83 62 80 72 83 84 92 90 89 101 101 111 102 140 101 162 95 174 98 180 83 184 77 180 65 168 50 175 43 202 61 216 80 221 100 230 123 243 125 255 140 264 148 271 171 283 173 295 168 320 168 345 172 365 176 375 176 395 186 410 211 424 214 440 217 452 232 473 240 475 245 484 234 495 234 502 239 514 252 494 262 485 288 482 300 490 313 496 315 515 324 512 345 511 360 506 386 505 393 523 405 538 411 548 403 562 411 570 408 590 413 605 424 617 444 628 457 642 461 658 452 671 450 679 443 690 445 698 490 700 530 706 558 710 563 723 572 733 568 743 585 750 610 748 622 756 636 749 655 740 685 740 692 718 700 711 712 730 735 745 747 749 762 763 775 766 797 781 811 765 813 750 811 723 825 713 821 690 832 682 837 646 877 628 884 635 894 634 903 637 912 630 922 628 938 619 934 610 945 603 969 598 968 586 985 598 1010 606 1032 619 1046 633 1056 629 1061 625 1069 636 1083 605 1106 578 1109 571 1125 560 1140 557 1155 561 1178 559 1178 590 1173 598 1198 622 1215 624 1230 630 1250 627 1255 657 1270 677 1285 697 1300 689 1330 685 1358 680 1375 683 1400 695 1430 720 1445 745 1460 40"/>
        </g>
        <g transform="translate(1380 610) scale(.3333)">
          <path d="M20 700 65 835 86 821 100 823 111 788 97 765 99 753 110 742 111 712 117 685 140 664 160 650 161 635 168 628 170 619 185 635 205 645 213 660 230 667 224 690 213 712 222 723 235 738 233 745 249 745 246 760 258 777 275 782 295 783 310 780 322 782 331 772 338 755 385 755 382 775 402 820 390 838 430 838 478 844 500 828 525 808 540 805 560 795 575 789 590 786 602 762 605 710 655 660 655 650 638 632 638 622 646 617 635 600 592 577 593 560 575 552 598 541 587 533 577 532 571 515 580 502 583 480 569 462 571 442 577 430 577 412 582 385 577 375 577 345 578 312 595 297 612 285 614 272 624 258 627 218 638 210 665 208 673 197 682 204 701 190 706 172 712 158 709 140 716 108 731 95 735 81 748 55 775 33 795 13 780 0 20 -40" stroke="none"/>
          <path fill="none" d="M65 835 86 821 100 823 111 788 97 765 99 753 110 742 111 712 117 685 140 664 160 650 161 635 168 628 170 619 185 635 205 645 213 660 230 667 224 690 213 712 222 723 235 738 233 745 249 745 246 760 258 777 275 782 295 783 310 780 322 782 331 772 338 755 385 755 382 775 402 820 390 838 430 838 478 844 500 828 525 808 540 805 560 795 575 789 590 786 602 762 605 710 655 660 655 650 638 632 638 622 646 617 635 600 592 577 593 560 575 552 598 541 587 533 577 532 571 515 580 502 583 480 569 462 571 442 577 430 577 412 582 385 577 375 577 345 578 312 595 297 612 285 614 272 624 258 627 218 638 210 645 213 665 208 673 197 682 204 701 190 706 172 712 158 709 140 716 108 731 95 735 81 748 55 775 33 795 13 810 20 830 17 846 7 858 -6 859 -20 864 -30 866 -45 853 -60 840 -80 822 -92 818 -107 814 -113 817 -125 805 -137 780 -139 755 -134 713 -139 700 -151 687 -165 680 -176 655 -175 642 -170 638 -175 638 -185 630 -189 612 -192 605 -212 598 -217 590 -231 568 -233 550 -243 535 -243 527 -249 520 -258 495 -267 475 -266 460 -269 452 -278 425 -278 400 -276 390 -280 384 -275 380 -278 330 -278"/>
          <path fill="none" d="M160 130 172 143 182 154 196 176 215 197 216 213 231 234 256 250 285 265 308 269 335 277 344 287 358 322 374 359 395 364 423 369 425 377 440 372 452 374 458 379 467 369 488 341 502 338 516 327 530 328 545 329 577 345"/>
        </g>
        <g transform="translate(920 640) scale(.3333)" fill="none">
          <path d="M340 53 378 52 380 83 395 87 404 100 430 100 434 119 422 129 421 156 428 165 414 182 428 197 425 210 413 211 396 232 418 250 422 265 438 278 434 290 444 304 457 310 452 322 453 338 464 366 467 382 463 413 438 434 415 464 407 458 354 453 355 461 367 479 386 501"/>
          <path d="M632 53 612 56 606 65 617 77 634 83 649 88 656 103 654 127 648 142 655 146 697 149 698 174 715 181 729 197 714 209 691 213 688 228 660 231 629 268 623 282 600 306 585 314 578 312 565 328 526 357 500 382 465 404"/>
        </g>
      </g>
      <text x="1280" y="739" font-size="13" fill="#1d1a10">Радомир</text>
    </svg>
  </section>
</main>

<div role="dialog" aria-labelledby="win-title" class="absolute top-[50px] right-[274px] bottom-[262px] left-[442px] flex flex-col rounded-t-lg border-r border-b border-l border-[#8f8f8f] bg-[#efefef] shadow-[0_4px_22px_rgba(0,0,0,0.55)]">
  <header class="grid h-[37px] shrink-0 grid-cols-[1fr_auto_1fr] items-center rounded-t-lg border-b border-[#1c1b1b] bg-[#333031] text-white">
    <span></span>
    <h1 id="win-title" class="pt-[2px] font-bold">pernik_obshtini — Features Total: 6, Filtered: 6, Selected: 0</h1>
    <div class="flex items-center justify-end gap-4 pr-[9px]">
      <button class="flex size-[18px] items-center justify-center" aria-label="Minimize"><span class="mt-1 h-px w-2 bg-white"></span></button>
      <button class="flex size-[18px] items-center justify-center" aria-label="Maximize"><span class="size-2 border border-white"></span></button>
      <button class="flex size-[18px] items-center justify-center rounded-full bg-[#e95420]" aria-label="Close"><svg class="size-2" viewBox="0 0 8 8"><path d="M.5.5l7 7M7.500.5l-7 7" stroke="#fff" stroke-width="1.200"/></svg></button>
    </div>
  </header>
  <div class="flex h-[31px] shrink-0 items-center pb-[2px] pl-[3px]" role="toolbar" aria-label="Attribute table">
    <button class="flex w-[25px] justify-center" aria-label="Toggle editing"><svg class="size-4"><use href="#pencil"/></svg></button>
    <button class="flex w-[25px] justify-center" aria-label="Multi edit" disabled><svg class="size-4"><use href="#multi-edit"/></svg></button>
    <button class="flex w-[25px] justify-center" aria-label="Save edits" disabled><svg class="size-4"><use href="#save"/></svg></button>
    <button class="flex w-[25px] justify-center" aria-label="Reload table"><svg class="size-4"><use href="#refresh"/></svg></button>
    <span class="mx-[3px] h-[11px] w-px bg-[#cdcdcd]"></span>
    <button class="flex w-[25px] justify-center" aria-label="Add feature" disabled><svg class="size-4"><use href="#add-row"/></svg></button>
    <button class="flex w-[25px] justify-center" aria-label="Delete features" disabled><svg class="size-4"><use href="#trash"/></svg></button>
    <button class="flex w-[25px] justify-center" aria-label="Cut" disabled><svg class="size-4"><use href="#scissors"/></svg></button>
    <button class="flex w-[25px] justify-center" aria-label="Copy" disabled><svg class="size-4"><use href="#copy"/></svg></button>
    <button class="flex w-[25px] justify-center" aria-label="Paste" disabled><svg class="size-4"><use href="#paste"/></svg></button>
    <span class="mx-[3px] h-[11px] w-px bg-[#cdcdcd]"></span>
    <button class="flex w-[25px] justify-center" aria-label="Select by expression"><svg class="size-4"><use href="#epsilon-select"/></svg></button>
    <button class="flex w-[25px] justify-center" aria-label="Select all"><svg class="size-4"><use href="#select-all"/></svg></button>
    <button class="flex w-[25px] justify-center" aria-label="Invert selection"><svg class="size-4"><use href="#invert"/></svg></button>
    <button class="flex w-[25px] justify-center" aria-label="Deselect all"><svg class="size-4"><use href="#deselect"/></svg></button>
    <button class="flex w-[25px] justify-center" aria-label="Filter using form"><svg class="size-4"><use href="#funnel"/></svg></button>
    <button class="flex w-[25px] justify-center" aria-label="Move selection to top"><svg class="size-4"><use href="#move-top"/></svg></button>
    <button class="flex w-[25px] justify-center" aria-label="Pan to rows"><svg class="size-4"><use href="#pan-to"/></svg></button>
    <button class="flex w-[25px] justify-center" aria-label="Zoom to rows"><svg class="size-4"><use href="#zoom-to"/></svg></button>
    <span class="mx-[3px] h-[11px] w-px bg-[#cdcdcd]"></span>
    <button class="flex w-[25px] justify-center" aria-label="New field" disabled><svg class="size-4"><use href="#new-field"/></svg></button>
    <button class="flex w-[25px] justify-center" aria-label="Delete field" disabled><svg class="size-4"><use href="#delete-field"/></svg></button>
    <button class="flex w-[25px] justify-center" aria-label="Organize columns"><svg class="size-4"><use href="#calc-pencil"/></svg></button>
    <button class="flex w-[25px] justify-center" aria-label="Field calculator"><svg class="size-4"><use href="#abacus"/></svg></button>
    <span class="mx-[3px] h-[11px] w-px bg-[#cdcdcd]"></span>
    <button class="flex w-[25px] justify-center" aria-label="Conditional formatting"><svg class="size-4"><use href="#conditional"/></svg></button>
    <span class="mx-[3px] h-[11px] w-px bg-[#cdcdcd]"></span>
    <button class="flex w-[25px] justify-center" aria-label="Dock attribute table"><svg class="size-4"><use href="#dock"/></svg></button>
    <button class="flex w-[25px] justify-center" aria-label="Actions"><svg class="size-4"><use href="#action"/></svg></button>
  </div>

  <div class="flex min-h-0 grow flex-col border border-[#b4b4b4] bg-linear-to-r from-[#efefef] from-[13px] to-white to-[13px]">
    <div class="bg-linear-to-b from-[#efefef] from-[21px] to-transparent to-[21px]">
      <table class="w-[384px] table-fixed border-separate border-spacing-0 bg-white">
        <colgroup><col class="w-[13px]"><col class="w-[100px]"><col class="w-[100px]"><col class="w-[171px]"></colgroup>
        <thead>
          <tr class="h-[21px] bg-linear-to-b from-[#f7f7f7] to-[#ececec] leading-5">
            <td class="border-r border-b border-[#b4b4b4] p-0"></td>
            <th scope="col" class="border-r border-b border-[#b4b4b4] p-0 font-normal">name</th>
            <th scope="col" class="border-r border-b border-[#b4b4b4] p-0 font-normal">area_km2</th>
            <th scope="col" class="border-b border-[#b4b4b4] p-0 font-normal">population_count_2011</th>
          </tr>
        </thead>
        <tbody>
          <tr class="h-[30px]">
            <th scope="row" class="border-r border-b border-[#b4b4b4] bg-[#f2f2f2] p-0 pt-[2px] font-normal">1</th>
            <td class="border-r border-b border-[#c3c3c3] p-0"><div class="flex h-[29px] items-center border-2 border-[#00f582] bg-[#e5f1fa] pl-px">Брезник</div></td>
            <td class="border-r border-b border-[#c3c3c3] py-0 pr-[3px] text-right">404.04</td>
            <td class="border-r border-b border-[#c3c3c3] py-0 pl-[3px]">6945</td>
          </tr>
          <tr class="h-[30px] bg-[#f7f7f7]">
            <th scope="row" class="border-r border-b border-[#b4b4b4] bg-[#f2f2f2] p-0 pt-[2px] font-normal">2</th>
            <td class="border-r border-b border-[#c3c3c3] py-0 pl-[3px]">Земен</td>
            <td class="border-r border-b border-[#c3c3c3] py-0 pr-[3px] text-right">247.08</td>
            <td class="border-r border-b border-[#c3c3c3] py-0 pl-[3px]">2762</td>
          </tr>
          <tr class="h-[30px]">
            <th scope="row" class="border-r border-b border-[#b4b4b4] bg-[#f2f2f2] p-0 pt-[2px] font-normal">3</th>
            <td class="border-r border-b border-[#c3c3c3] py-0 pl-[3px]">Ковачевци</td>
            <td class="border-r border-b border-[#c3c3c3] py-0 pr-[3px] text-right">144.95</td>
            <td class="border-r border-b border-[#c3c3c3] py-0 pl-[3px]">1600</td>
          </tr>
          <tr class="h-[30px] bg-[#f7f7f7]">
            <th scope="row" class="border-r border-b border-[#b4b4b4] bg-[#f2f2f2] p-0 pt-[2px] font-normal">4</th>
            <td class="border-r border-b border-[#c3c3c3] py-0 pl-[3px]">Перник</td>
            <td class="border-r border-b border-[#c3c3c3] py-0 pr-[3px] text-right">477.4</td>
            <td class="border-r border-b border-[#c3c3c3] py-0 pl-[3px]">97181</td>
          </tr>
          <tr class="h-[30px]">
            <th scope="row" class="border-r border-b border-[#b4b4b4] bg-[#f2f2f2] p-0 pt-[2px] font-normal">5</th>
            <td class="border-r border-b border-[#c3c3c3] py-0 pl-[3px]">Радомир</td>
            <td class="border-r border-b border-[#c3c3c3] py-0 pr-[3px] text-right">540.49</td>
            <td class="border-r border-b border-[#c3c3c3] py-0 pl-[3px]">20896</td>
          </tr>
          <tr class="h-[30px] bg-[#f7f7f7]">
            <th scope="row" class="border-r border-b border-[#b4b4b4] bg-[#f2f2f2] p-0 pt-[2px] font-normal">6</th>
            <td class="border-r border-b border-[#c3c3c3] py-0 pl-[3px]">Трън</td>
            <td class="border-r border-b border-[#c3c3c3] py-0 pr-[3px] text-right">573.46</td>
            <td class="border-r border-b border-[#c3c3c3] py-0 pl-[3px]">4146</td>
          </tr>
        </tbody>
      </table>
    </div>
  </div>

  <footer class="flex h-[30px] shrink-0 items-center justify-between px-[3px]">
    <button class="flex h-6 items-center rounded-sm border border-[#a9a9a9] bg-linear-to-b from-white to-[#f1f1f1] pr-[2px] pl-[2px]">
      <svg class="mr-[2px] size-4"><use href="#funnel"/></svg>Show All Features<svg class="mb-1 ml-[11px] h-[3px] w-[5px] self-end"><use href="#arrow-down"/></svg>
    </button>
    <div class="flex items-center gap-1">
      <button class="flex size-4 items-center justify-center" aria-label="Switch to form view"><svg class="size-4"><use href="#form-view"/></svg></button>
      <button class="flex size-6 items-center justify-center rounded-sm border border-[#a9a9a9] bg-[#dcdcdc]" aria-label="Switch to table view"><svg class="size-4"><use href="#table-view"/></svg></button>
    </div>
  </footer>
</div>
</body>
</html>
